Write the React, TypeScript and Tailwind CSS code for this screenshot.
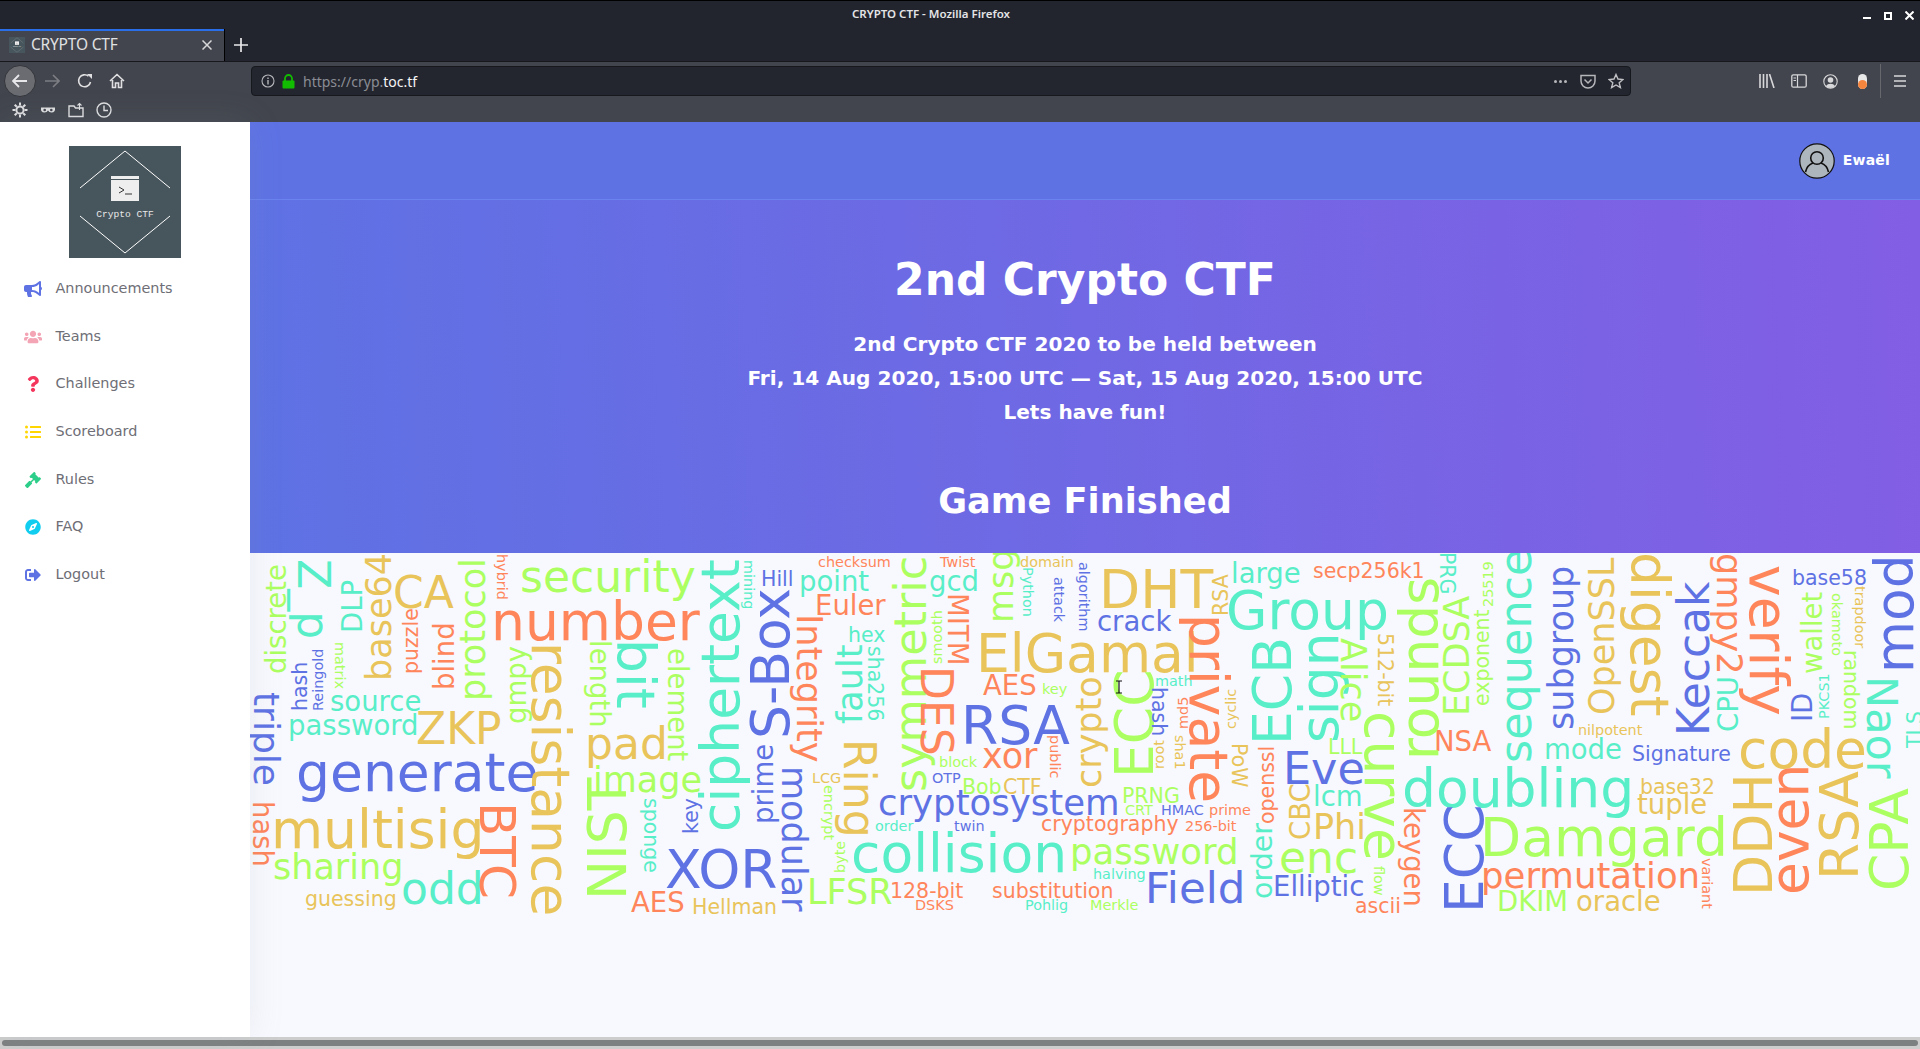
import React from "react";
import { FaBullhorn, FaUsers, FaQuestion, FaListUl, FaGavel, FaCompass, FaSignOutAlt } from "react-icons/fa";

const B = "#5e72e4", T = "#58eec8", G = "#abff60", Y = "#e8c45a", O = "#ff855b";
// text, x, y, font size, colour, rotation (0 | 90 | -90). x,y = start of baseline in page pixels
type W = [string, number, number, number, string, number?];
const words: W[] = [
  ["security",520,591,44,G],["number",491,639,53.5,O],["CA",393,607,44,Y],["source",330,710,27.5,T],["password",288,734,27.5,T],["ZKP",416,743,44,Y],["pad",585,758,44,Y],["generate",296,790,53.5,B],["image",593,791,35,G],["multisig",271,847,53.5,Y],["sharing",273,878,35,G],["odd",401,903,44,T],["guessing",305,905,20.5,Y],["XOR",665,887,53.5,B],["AES",631,911,27.5,O],["Hellman",692,913,20.5,Y],["Hill",761,585,20.5,B],
  ["discrete",286,673,27.5,G,-90],["Z_p",298,558,44,T,90],["base64",391,680,35,Y,-90],["DLP",362,632,27.5,T,-90],["hash",307,710,20.5,B,-90],["Reingold",323,710,14.4,B,-90],["matrix",335,641,14.4,G,90],["puzzle",418,673,20.5,O,-90],["blind",454,689,27.5,O,-90],["protocol",485,700,35,G,-90],["hybrid",497,553,14.4,O,90],["gmpy",526,723,27.5,G,-90],["resistance",532,641,53.5,Y,90],["length",590,639,27.5,G,90],["bit",617,638,53.5,T,90],["element",668,647,27.5,G,90],["ciphertext",739,831,53.5,T,-90],["mining",744,559,14.4,T,90],["S-Box",789,738,53.5,B,-90],["prime",773,823,27.5,B,-90],["modular",782,765,35,B,90],["Integrity",797,613,35,O,90],["triple",254,691,36,B,90],["hash",253,800,27.5,O,90],["BTC",480,801,50,O,90],["NIST",626,899,53.5,G,-90],["sponge",644,797,20.5,T,90],["key",698,833,20.5,B,-90],
  ["checksum",818,566,14.4,O],["Twist",940,566,14.4,O],["domain",1020,566,14.4,Y],["point",799,590,27.5,T],["Euler",815,614,27.5,O],["gcd",929,590,27.5,T],["hex",848,641,20.5,T],["DHT",1099,607,53.5,Y],["crack",1097,630,27.5,B],["ElGamal",976,671,53.5,Y],["large",1231,582,27.5,T],["secp256k1",1313,577,20.5,O],["Group",1226,628,53.5,T],["AES",983,694,27.5,O],["key",1042,693,14.4,G],["math",1155,685,14.4,T],["RSA",961,743,53.5,B],["xor",982,767,35,O],["block",939,766,14.4,G],["LCG",812,782,14.4,Y],["OTP",932,782,14.4,B],["Bob",962,793,20.5,G],["CTF",1003,793,20.5,Y],["PRNG",1122,802,20.5,G],["cryptosystem",878,814,35.5,B],["CRT",1125,814,14.4,G],["HMAC",1161,814,14.4,B],["prime",1209,814,14.4,O],["order",875,830,14.4,T],["twin",954,830,14.4,B],["cryptography",1041,830,20.5,O],["256-bit",1185,830,14.4,O],["collision",851,871,53.5,T],["password",1070,863,35.5,G],["halving",1093,878,14.4,T],["Field",1145,902,43.5,B],["enc",1279,872,44,G],["Elliptic",1273,895,27.5,B],["LFSR",807,903,35,G],["128-bit",890,897,20.5,O],["substitution",992,897,20.5,O],["DSKS",915,909,14.4,O],["Pohlig",1025,909,14.4,T],["Merkle",1090,909,14.4,G],["ascii",1355,912,20.5,O],["lcm",1313,805,27.5,T],["Phi",1313,838,35,Y],["Eve",1283,783,44.5,B],["LLL",1328,753,20.5,G],
  ["symmetric",926,791,44.5,G,-90],["msg",1013,622,35,G,-90],["Python",1023,566,14.4,T,90],["attack",1054,576,14.4,B,90],["algorithm",1079,561,14.4,B,90],["RSA",1228,615,20.5,Y,-90],["MITM",948,592,27.5,O,90],["smooth",942,663,14.4,G,-90],["fault",862,723,35,T,-90],["sha256",868,645,20.5,T,90],["Ring",844,738,44,Y,90],["DES",921,665,44,O,90],["encrypt",824,784,14.4,G,90],["byte",845,872,14.4,G,-90],["crypto",1101,787,35,Y,-90],["ECC",1153,777,53.5,G,-90],["hash",1152,686,20.5,B,90],["root",1164,768,14.4,Y,-90],["md5",1188,728,14.4,O,-90],["sha1",1175,734,14.4,Y,90],["cyclic",1236,728,14.4,Y,-90],["public",1050,734,14.4,O,90],["private",1190,613,53.5,O,90],["PoW",1232,742,20.5,Y,90],["openssl",1274,823,20.5,O,-90],["CBC",1310,839,27.5,Y,-90],["order",1272,898,28.5,T,-90],["ECB",1291,744,53.5,T,-90],["sign",1338,742,53.5,T,-90],["Alice",1341,637,35,G,90],
  ["NSA",1434,750,27.5,O],["nilpotent",1578,734,14.4,Y],["mode",1544,758,27.5,T],["Signature",1632,760,20.5,B],["code",1738,767,53.5,Y],["base58",1792,584,20.5,B],["doubling",1402,806,53.5,T],["base32",1640,793,20.5,Y],["tuple",1637,813,27.5,Y],["Damgard",1480,855,53.5,G],["permutation",1481,887,35.5,O],["DKIM",1497,910,27.5,G],["oracle",1576,910,27.5,Y],
  ["rounds",1438,759,53.5,G,-90],["PRG",1440,551,20.5,T,90],["ECDSA",1469,715,35,G,-90],["25519",1493,606,14.4,G,-90],["exponent",1489,705,20.5,G,-90],["512-bit",1378,632,20.5,Y,90],["curve",1365,710,53.5,G,90],["sequence",1531,762,44.5,T,-90],["subgroup",1573,729,35,B,-90],["OpenSSL",1614,714,35,Y,-90],["digest",1631,551,53.5,Y,90],["Keccak",1709,735,44,B,-90],["gmpy2",1717,552,35,O,90],["CPU",1738,731,27.5,T,-90],["verify",1750,564,53.5,O,90],["wallet",1822,673,27.5,G,-90],["ID",1812,721,27.5,B,-90],["okamoto",1832,592,14.4,G,90],["PKCS1",1829,718,14.4,T,-90],["random",1844,649,20.5,G,90],["trapdoor",1855,585,14.4,Y,90],["mod",1913,672,53.5,B,-90],["Naor",1867,675,43,T,90],["TLS",1922,747,20.5,T,-90],["DDH",1772,895,53.5,Y,-90],["even",1808,894,53.5,O,-90],["RSA",1858,879,53.5,Y,-90],["CPA",1908,890,53.5,G,-90],["ECC",1483,912,53.5,B,-90],["keygen",1404,806,27.5,O,90],["flow",1374,865,14.4,G,90],["variant",1702,857,14.4,O,90],
];

const nav: [string, React.ComponentType<{ className?: string }>, string][] = [
  ["Announcements", FaBullhorn, "text-[#5e72e4]"],
  ["Teams", FaUsers, "text-[#f3a4b5]"],
  ["Challenges", FaQuestion, "text-[#f5365c]"],
  ["Scoreboard", FaListUl, "text-[#ffd600]"],
  ["Rules", FaGavel, "text-[#2dce89]"],
  ["FAQ", FaCompass, "text-[#11cdef]"],
  ["Logout", FaSignOutAlt, "text-[#5e72e4]"],
];

function LogoMark() {
  return (
    <svg viewBox="0 0 112 112" className="h-full w-full">
      <rect width="112" height="112" fill="#47555c" />
      <g stroke="#fff" strokeWidth="1" fill="none">
        <path d="M11 42 L56 5 L101 42" />
        <path d="M11 70 L56 107 L101 70" />
      </g>
      <rect x="42" y="30" width="28" height="25" fill="#eeeeee" />
      <rect x="42" y="33" width="28" height="1" fill="#47555c" />
      <path d="M50 41 l5 3 l-5 3 M56 48 h7" stroke="#333" fill="none" strokeWidth="1" />
      <text x="56" y="71" textAnchor="middle" fill="#e8e8e8" fontSize="9.6" fontFamily="'Liberation Mono', monospace">Crypto CTF</text>
    </svg>
  );
}

function Chrome() {
  const stroke = { fill: "none", stroke: "#e0e0e2", strokeWidth: 1.6 };
  return (
    <header className="flex w-full shrink-0 flex-col border-t border-black bg-[#22252e] font-['Noto_Sans',sans-serif]">
      <div className="relative flex h-[28px] items-center justify-center pb-[2px] pr-[58px]">
        <span className="text-[11.5px] font-semibold text-[#e4e4e6]">CRYPTO CTF - Mozilla Firefox</span>
        <div className="absolute right-[6px] top-[10px] flex items-center gap-[13px]">
          <span className="mt-[5px] h-[2px] w-[8px] bg-white" />
          <span className="h-[8px] w-[8px] border-2 border-white" />
          <svg width="9" height="9" viewBox="0 0 9 9"><path d="M0.5 0.5 L8.5 8.5 M8.5 0.5 L0.5 8.5" stroke="#fff" strokeWidth="2" /></svg>
        </div>
      </div>
      <div className="flex h-[32px] items-stretch">
        <div className="flex w-[224px] items-center border-t-2 border-[#2a6fe8] bg-[#42454d] pb-[2px] pl-[9px] pr-[12px]">
          <span className="h-[16px] w-[16px] shrink-0"><LogoMark /></span>
          <span className="ml-[6px] flex-1 text-[15.5px] tracking-[-0.2px] text-[#e0e1e3]">CRYPTO CTF</span>
          <svg width="10" height="10" viewBox="0 0 10 10"><path d="M0.5 0.5 L9.5 9.5 M9.5 0.5 L0.5 9.5" stroke="#d8d8da" strokeWidth="1.5" /></svg>
        </div>
        <div className="flex w-[32px] items-center justify-center border-l border-black">
          <svg width="14" height="14" viewBox="0 0 14 14"><path d="M7 0 V14 M0 7 H14" stroke="#e8e8ea" strokeWidth="1.7" /></svg>
        </div>
      </div>
      <div className="flex h-[61px] flex-col border-t border-[#16181d] bg-[#42454d]">
        <div className="relative flex h-[38px] items-center">
          <div className="ml-[4px] flex h-[32px] w-[32px] items-center justify-center rounded-full border border-[#33353b] bg-[#6a6c72]">
            <svg width="16" height="14" viewBox="0 0 16 14"><path d="M1 7 H15 M7 1 L1 7 L7 13" stroke="#e8e8ea" strokeWidth="1.8" fill="none" /></svg>
          </div>
          <svg className="ml-[8px]" width="16" height="14" viewBox="0 0 16 14"><path d="M1 7 H15 M9 1 L15 7 L9 13" stroke="#7c7e84" strokeWidth="1.6" fill="none" /></svg>
          <svg className="ml-[17px]" width="16" height="16" viewBox="0 0 16 16"><path d="M13.5 9 A6 6 0 1 1 11.5 3.2" {...stroke} /><path d="M10 1 H15 V6 Z" fill="#e0e0e2" /></svg>
          <svg className="ml-[16px]" width="16" height="16" viewBox="0 0 16 16"><path d="M1 8 L8 1.5 L15 8 M3.5 7 V14.5 H6.5 V10 H9.5 V14.5 H12.5 V7" {...stroke} /></svg>
          <div className="ml-[126px] flex h-[30px] flex-1 items-center rounded-[4px] border border-[#16181d] bg-[#24262f] pl-[9px]">
            <svg width="14" height="14" viewBox="0 0 14 14"><circle cx="7" cy="7" r="6" fill="none" stroke="#b5b6ba" strokeWidth="1.1" /><path d="M7 6 V10.5 M7 3.5 V5" stroke="#b5b6ba" strokeWidth="1.4" /></svg>
            <svg className="ml-[7px]" width="13" height="15" viewBox="0 0 13 15"><path d="M3 7 V4.5 A3.5 3.5 0 0 1 10 4.5 V7" fill="none" stroke="#12bc00" strokeWidth="1.8" /><rect x="0.5" y="6.5" width="12" height="8" rx="1" fill="#12bc00" /></svg>
            <span className="ml-[8px] flex-1 text-[14px] text-[#8a8d94]">https://cryp.<span className="text-[#f4f4f5]">toc.tf</span></span>
            <span className="mr-[13px] flex gap-[2px]">
              <i className="h-[3px] w-[3px] rounded-full bg-[#b5b6ba]" /><i className="h-[3px] w-[3px] rounded-full bg-[#b5b6ba]" /><i className="h-[3px] w-[3px] rounded-full bg-[#b5b6ba]" />
            </span>
            <svg className="mr-[12px]" width="16" height="15" viewBox="0 0 16 15"><path d="M1 1.5 H15 V7 A7 7 0 0 1 1 7 Z" fill="none" stroke="#b5b6ba" strokeWidth="1.5" /><path d="M4.5 5.5 L8 9 L11.5 5.5" fill="none" stroke="#b5b6ba" strokeWidth="1.5" /></svg>
            <svg className="mr-[6px]" width="16" height="16" viewBox="0 0 16 16"><path d="M8 1.5 L10 6 L15 6.5 L11.2 9.8 L12.4 14.6 L8 12 L3.6 14.6 L4.8 9.8 L1 6.5 L6 6 Z" fill="none" stroke="#c0c1c5" strokeWidth="1.4" /></svg>
          </div>
          <div className="ml-[128px] mr-[14px] flex items-center">
            <svg width="16" height="14" viewBox="0 0 16 14"><path d="M1 0 V14 M4.5 0 V14 M8 0 V14 M10.5 0 L15 14" stroke="#d8d8da" strokeWidth="1.6" /></svg>
            <svg className="ml-[16px]" width="16" height="14" viewBox="0 0 16 14"><rect x="0.8" y="0.8" width="14.4" height="12.4" rx="1.5" fill="none" stroke="#d8d8da" strokeWidth="1.3" /><path d="M6.5 1 V13 M2.5 4 H5 M2.5 6.5 H5" stroke="#d8d8da" strokeWidth="1.2" /></svg>
            <svg className="ml-[16px]" width="15" height="15" viewBox="0 0 15 15"><circle cx="7.5" cy="7.5" r="6.7" fill="none" stroke="#d8d8da" strokeWidth="1.1" /><circle cx="7.5" cy="6" r="2.8" fill="#d8d8da" /><path d="M3 12 A5 4 0 0 1 12 12 A6 6 0 0 1 3 12" fill="#d8d8da" /></svg>
            <span className="relative ml-[20px] h-[15px] w-[9px] rounded-full bg-[#e8e8e8]"><i className="absolute bottom-0 left-0 h-[9px] w-[9px] rounded-full bg-[#f5843c]" /></span>
            <span className="ml-[13px] h-[34px] w-px bg-[#66686e]" />
            <svg className="ml-[13px]" width="12" height="12" viewBox="0 0 12 12"><path d="M0 1 H12 M0 6 H12 M0 11 H12" stroke="#d8d8da" strokeWidth="1.6" /></svg>
          </div>
        </div>
        <div className="flex h-[22px] items-start gap-[12px] pl-[12px] pt-[2px]">
          <svg width="16" height="16" viewBox="0 0 16 16"><circle cx="8" cy="8" r="3.6" fill="none" stroke="#dedee0" strokeWidth="2" /><path d="M8 0.5 V3.5 M8 12.5 V15.5 M0.5 8 H3.5 M12.5 8 H15.5 M2.7 2.7 L4.8 4.8 M11.2 11.2 L13.3 13.3 M13.3 2.7 L11.2 4.8 M4.8 11.2 L2.7 13.3" stroke="#dedee0" strokeWidth="2" /></svg>
          <svg width="16" height="16" viewBox="0 0 16 16"><path d="M1 5.5 H15 Q15.6 10.5 11.5 10.5 Q9 10.5 8 8.5 Q7 10.5 4.5 10.5 Q0.4 10.5 1 5.5 Z" fill="#dedee0" /><circle cx="4.7" cy="8" r="1.3" fill="#42454d" /><circle cx="11.3" cy="8" r="1.3" fill="#42454d" /></svg>
          <svg width="16" height="16" viewBox="0 0 16 16"><path d="M1 4 H6 L7.5 6 H15 V14.5 H1 Z" fill="none" stroke="#dedee0" strokeWidth="1.4" /><path d="M11.5 8 V1.5 M9.5 3.5 L11.5 1.5 L13.5 3.5" fill="none" stroke="#dedee0" strokeWidth="1.1" /></svg>
          <svg width="16" height="16" viewBox="0 0 16 16"><circle cx="8" cy="8" r="7" fill="none" stroke="#dedee0" strokeWidth="1.4" /><path d="M8 3.5 V8.5 H12" fill="none" stroke="#dedee0" strokeWidth="1.4" /></svg>
        </div>
      </div>
    </header>
  );
}

export default function App() {
  return (
    <div className="flex h-[1049px] w-[1920px] flex-col overflow-hidden bg-[#f8f9fe] font-['DejaVu_Sans',sans-serif]">
      <Chrome />
      <div className="flex min-h-0 flex-1">
        <aside className="z-10 flex w-[250px] shrink-0 flex-col items-center bg-white pt-[24px] shadow-[0_0_32px_0_rgba(136,152,170,0.15)]">
          <div className="h-[112px] w-[112px]"><LogoMark /></div>
          <nav className="mt-[7px] flex w-full flex-col">
            {nav.map(([label, Icon, color]) => (
              <div key={label} className="flex h-[47.7px] items-center pl-[24px] text-[14.4px] text-[#6e6e76]">
                <span className="flex w-[31.5px] shrink-0"><Icon className={`h-[16px] w-[18px] ${color}`} /></span>
                {label}
              </div>
            ))}
          </nav>
        </aside>
        <main className="flex min-w-0 flex-1 flex-col">
          <div className="flex h-[78px] shrink-0 items-center justify-end border-b border-[#6a83ee] bg-[#5e72e4] pr-[30px]">
            <svg width="36" height="36" viewBox="0 0 36 36">
              <circle cx="18" cy="18" r="17.2" fill="#adb5bd" stroke="#111" strokeWidth="1.2" />
              <circle cx="18" cy="15" r="6.3" fill="none" stroke="#111" strokeWidth="1.6" />
              <path d="M6.5 29 C8 22 12.5 20.5 14 20 M29.5 29 C28 22 23.5 20.5 22 20" fill="none" stroke="#111" strokeWidth="1.6" />
            </svg>
            <span className="ml-[8px] text-[14px] font-bold tracking-[0.2px] text-white">Ewaël</span>
          </div>
          <section className="flex h-[353px] shrink-0 flex-col items-center bg-[linear-gradient(87deg,#5e72e4_0,#825ee4_100%)] pt-[54px] text-white">
            <h1 className="text-[44px] font-bold leading-[1.2]">2nd Crypto CTF</h1>
            <div className="mt-[20px] text-center text-[20.1px] font-bold leading-[34px]">
              <p>2nd Crypto CTF 2020 to be held between</p>
              <p>Fri, 14 Aug 2020, 15:00 UTC — Sat, 15 Aug 2020, 15:00 UTC</p>
              <p>Lets have fun!</p>
            </div>
            <h2 className="mt-[51px] text-[35.2px] font-bold leading-[1.2]">Game Finished</h2>
          </section>
          <svg viewBox="250 552 1670 485" className="h-[485px] w-[1670px] shrink-0" fontFamily="'DejaVu Sans', sans-serif">
            {words.map(([t, x, y, s, c, r], i) => (
              <text key={i} x={x} y={y} fontSize={s} fill={c} transform={r ? `rotate(${r} ${x} ${y})` : undefined}>{t}</text>
            ))}
            <path d="M1116 680 h6 M1116 692 h6 M1119 680 v12" stroke="#111" strokeWidth="1.2" fill="none" />
          </svg>
          <div className="flex-1" />
        </main>
      </div>
      <div className="flex h-[12px] shrink-0 items-center bg-[#cdcdcd] px-[2px]">
        <div className="h-[6px] w-full rounded-full bg-[#7d8080]" />
      </div>
    </div>
  );
}
